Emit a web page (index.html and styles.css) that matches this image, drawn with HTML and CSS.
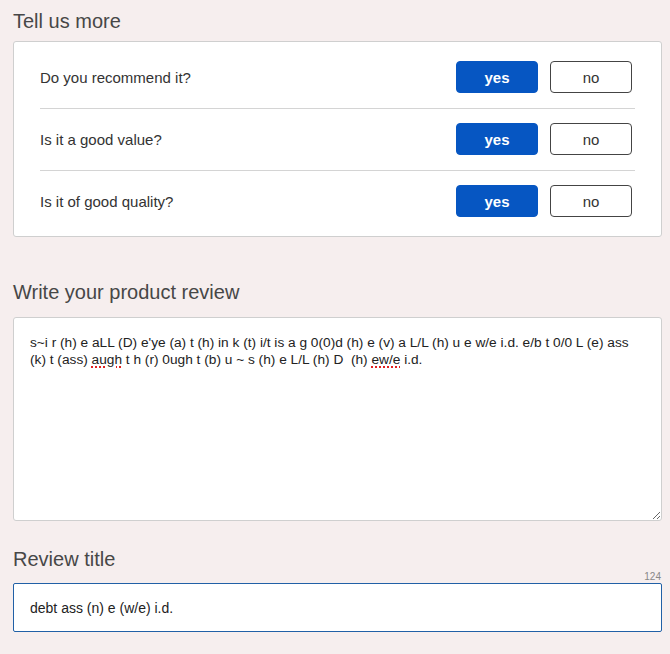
FILE: index.html
```html
<!DOCTYPE html>
<html>
<head>
<meta charset="utf-8">
<link rel="stylesheet" href="styles.css">
</head>
<body>
<div class="page">
  <h2 class="heading first">Tell us more</h2>
  <div class="card">
    <div class="row">
      <span class="question">Do you recommend it?</span>
      <div class="choices"><button class="btn yes">yes</button><button class="btn no">no</button></div>
    </div>
    <div class="row">
      <span class="question">Is it a good value?</span>
      <div class="choices"><button class="btn yes">yes</button><button class="btn no">no</button></div>
    </div>
    <div class="row">
      <span class="question">Is it of good quality?</span>
      <div class="choices"><button class="btn yes">yes</button><button class="btn no">no</button></div>
    </div>
  </div>

  <h2 class="heading review">Write your product review</h2>
  <div class="review-text">s~i r (h) e aLL (D) e'ye (a) t (h) in k (t) i/t is a g 0(0)d (h) e (v) a L/L (h) u e w/e i.d. e/b t 0/0 L (e) ass (k) t (ass) <span class="misspelled">augh</span> t h (r) 0ugh t (b) u ~ s (h) e L/L (h) D &nbsp;(h) <span class="misspelled">ew/e</span> i.d.</div>

  <h2 class="heading title">Review title</h2>
  <div class="counter">124</div>
  <input class="title-input" type="text" value="debt ass (n) e (w/e) i.d." spellcheck="false">
</div>
</body>
</html>
```

FILE: styles.css
```css
html, body {
  margin: 0;
  padding: 0;
  background: #f6eeee;
}
body {
  font-family: "Liberation Sans", Arial, sans-serif;
  color: #333;
}
.page {
  width: 649px;
  padding: 0 8px 0 13px;
}
.heading {
  margin: 0;
  font-size: 20px;
  line-height: 24px;
  font-weight: normal;
  color: #474747;
}
.heading.first {
  padding-top: 9px;
  margin-bottom: 8px;
}
.heading.review {
  margin-top: 43px;
  margin-bottom: 13px;
}
.heading.title {
  margin-top: 26px;
}
.card {
  background: #fff;
  border: 1px solid #cfcfcf;
  border-radius: 3px;
  padding: 5px 26px 4px;
}
.row {
  display: flex;
  align-items: center;
  justify-content: space-between;
  padding: 14px 0 15px;
  border-bottom: 1px solid #d4d4d4;
}
.row:last-child {
  border-bottom: none;
}
.question {
  font-size: 15px;
  color: #333;
}
.choices {
  display: flex;
  gap: 12px;
  margin-right: 3px;
}
.btn {
  width: 82px;
  height: 32px;
  border-radius: 4px;
  font-family: "Liberation Sans", Arial, sans-serif;
  font-size: 15px;
  padding: 0;
  box-sizing: border-box;
}
.btn.yes {
  background: #0656c2;
  border: 1px solid #0656c2;
  color: #fff;
  font-weight: bold;
}
.btn.no {
  background: #fff;
  border: 1px solid #444;
  color: #333;
}
.review-text {
  display: block;
  width: 649px;
  height: 204px;
  box-sizing: border-box;
  border: 1px solid #cfcfcf;
  border-radius: 3px;
  background: #fff;
  padding: 16px 16px;
  font-family: "Liberation Sans", Arial, sans-serif;
  font-size: 13.7px;
  line-height: 17px;
  color: #222;
  resize: vertical;
  overflow: auto;
  margin: 0;
}
.misspelled {
  text-decoration: underline dotted #e02020;
  text-decoration-thickness: 2px;
  text-underline-offset: 2px;
}
.counter {
  text-align: right;
  font-size: 10px;
  line-height: 12px;
  color: #888;
  padding-right: 1px;
}
.title-input {
  display: block;
  width: 649px;
  height: 49px;
  box-sizing: border-box;
  border: 1px solid #2160a6;
  border-radius: 2px;
  background: #fff;
  padding: 0 16px;
  font-family: "Liberation Sans", Arial, sans-serif;
  font-size: 14px;
  color: #222;
  outline: none;
  margin: 0;
}
```
